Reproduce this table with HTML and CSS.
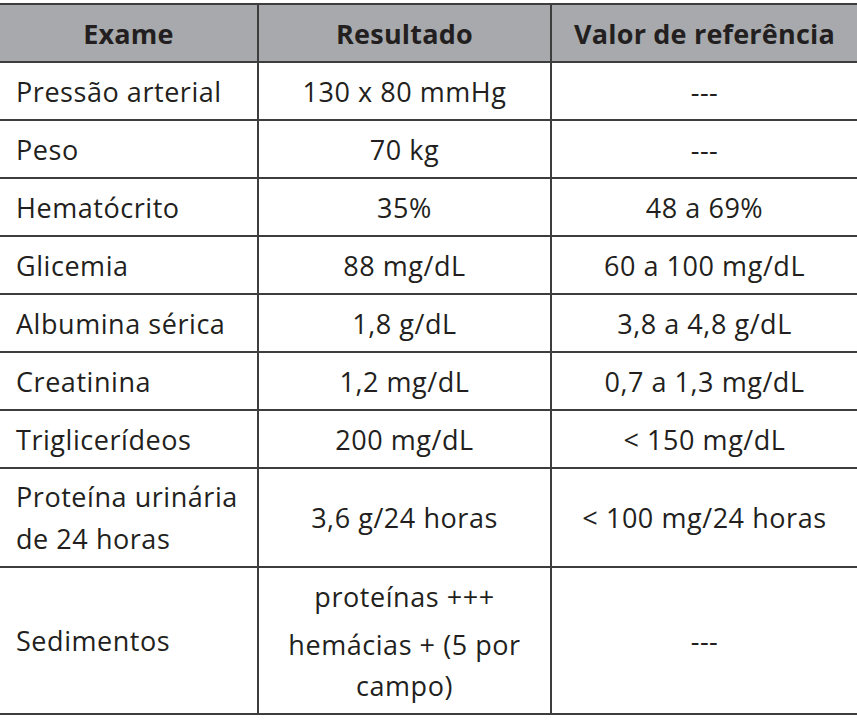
FILE: index.html
```html
<!DOCTYPE html>
<html lang="pt">
<head>
<meta charset="utf-8">
<link rel="stylesheet" href="styles.css">
</head>
<body>
<table class="exams">
  <colgroup>
    <col class="c1"><col class="c2"><col class="c3">
  </colgroup>
  <thead>
    <tr class="head"><th>Exame</th><th>Resultado</th><th>Valor de referência</th></tr>
  </thead>
  <tbody>
    <tr class="row"><td class="name">Pressão arterial</td><td>130 x 80 mmHg</td><td>---</td></tr>
    <tr class="row"><td class="name">Peso</td><td>70 kg</td><td>---</td></tr>
    <tr class="row"><td class="name">Hematócrito</td><td>35%</td><td>48 a 69%</td></tr>
    <tr class="row"><td class="name">Glicemia</td><td>88 mg/dL</td><td>60 a 100 mg/dL</td></tr>
    <tr class="row"><td class="name">Albumina sérica</td><td>1,8 g/dL</td><td>3,8 a 4,8 g/dL</td></tr>
    <tr class="row"><td class="name">Creatinina</td><td>1,2 mg/dL</td><td>0,7 a 1,3 mg/dL</td></tr>
    <tr class="row"><td class="name">Triglicerídeos</td><td>200 mg/dL</td><td>&lt; 150 mg/dL</td></tr>
    <tr class="row-2"><td class="name">Proteína urinária<br>de 24 horas</td><td>3,6 g/24 horas</td><td>&lt; 100 mg/24 horas</td></tr>
    <tr class="row-3"><td class="name">Sedimentos</td><td><p class="p1">proteínas +++</p><p class="p2">hemácias + (5 por<br>campo)</p></td><td>---</td></tr>
  </tbody>
</table>
</body>
</html>
```
FILE: styles.css
```css
html, body {
  margin: 0;
  padding: 0;
  background: #ffffff;
}
body {
  padding-top: 3px;
}
.exams {
  width: 857px;
  border-collapse: collapse;
  table-layout: fixed;
  font-family: "Open Sans", "Noto Sans", sans-serif;
  font-size: 27px;
  letter-spacing: 0.55px;
  color: #231f20;
}
.c1 { width: 258px; }
.c2 { width: 293px; }
.c3 { width: 306px; }
.exams th, .exams td {
  border-top: 2px solid #3d3d3d;
  border-bottom: 2px solid #3d3d3d;
  padding: 0;
  text-align: center;
  vertical-align: middle;
}
.exams th + th, .exams td + td {
  border-left: 2px solid #3d3d3d;
}
.head th {
  background: #a7a9ac;
  font-weight: 700;
  height: 56px;
  font-size: 27px;
  letter-spacing: 0.2px;
}
.row td { height: 56px; }
.row-2 td { height: 97px; line-height: 42px; }
.row-3 td { height: 145px; }
.exams td.name {
  text-align: left;
  padding-left: 16px;
}
.p1 { margin: 0 0 6px; line-height: 42px; }
.p2 { margin: 0; line-height: 41px; }
```
